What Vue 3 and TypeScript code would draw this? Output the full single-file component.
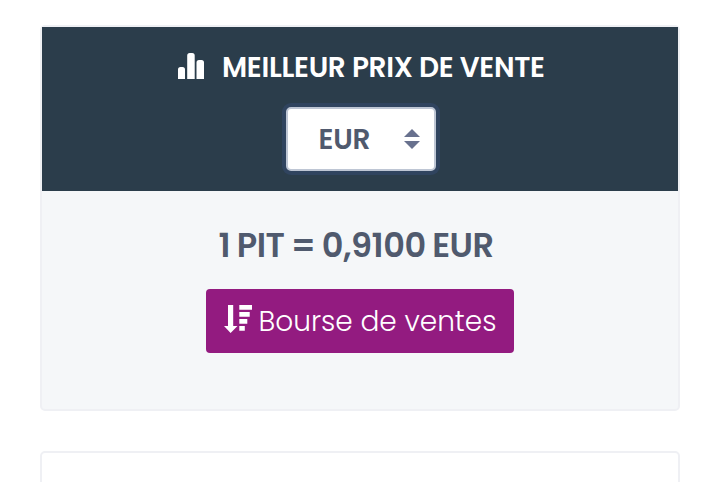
<script setup lang="ts">
import { ref } from 'vue'

const currency = ref<string>('EUR')
const price = ref<string>('0,9100')
</script>

<template>
  <main class="page">
    <section class="card">
      <header class="card-header">
        <h2 class="title">
          <svg class="chart-icon" viewBox="0 0 26 26" aria-hidden="true">
            <path d="M0 26V16.500q0-2.500 2.500-2.500h2q2.500 0 2.500 2.500V26zM9.200 26V2.500q0-2.500 2.500-2.500h2.500q2.500 0 2.500 2.500V26zM18.500 26V9.500q0-2.500 2.500-2.500h2.500q2.500 0 2.500 2.500V26z" />
          </svg>
          <span class="title-text">MEILLEUR PRIX DE VENTE</span>
        </h2>
        <button class="select" type="button">
          <span class="select-text">{{ currency }}</span>
          <svg class="caret" viewBox="0 0 16 20" aria-hidden="true">
            <path d="M0 8L8 0l8 8zM0 12h16l-8 8z" />
          </svg>
        </button>
      </header>
      <div class="card-body">
        <p class="price">1 PIT = {{ price }} {{ currency }}</p>
        <button class="action" type="button">
          <svg class="sort-icon" viewBox="0 0 28 28" aria-hidden="true">
            <path d="M4 0h5.200v21h4.300L6.600 28 0 21h4zM15.300 0H28v4.700H15.300zM15.300 7h10.400v4.700H15.300zM15.300 14h8v4.700h-8zM15.300 21h5.500v4.700h-5.500z" />
          </svg>
          <span class="action-text">Bourse de ventes</span>
        </button>
      </div>
    </section>
    <section class="card next-card"></section>
  </main>
</template>

<style>
body {
  margin: 0;
  background: #fff;
  overflow: hidden;
}
</style>

<style scoped>
.page {
  box-sizing: border-box;
  height: 482px;
  padding: 25px 40px 0;
  overflow: hidden;
  font-family: Poppins, Inter, sans-serif;
}
.card {
  box-sizing: border-box;
  height: 386px;
  border: 2px solid #eff0f4;
  border-radius: 5px;
  background: #f5f7f9;
}
.next-card {
  height: 120px;
  margin-top: 40px;
  background: #fff;
}
.card-header {
  box-sizing: border-box;
  height: 164px;
  padding-top: 20px;
  display: flex;
  flex-direction: column;
  align-items: center;
  background: #2b3d4b;
}
.title {
  width: 366px;
  height: 40px;
  margin: 0;
  display: flex;
  align-items: center;
  color: #fff;
  font-size: 28px;
  font-weight: 600;
  line-height: 40px;
  white-space: nowrap;
}
.chart-icon {
  width: 26px;
  height: 26px;
  margin: 0 18px 2px 1px;
  fill: #fff;
  flex: none;
}
.title-text {
  padding-top: 2px;
  letter-spacing: -0.3px;
}
.select {
  box-sizing: border-box;
  width: 150px;
  height: 64px;
  margin: 20px 0 0 2px;
  padding: 0 14px 0 30.500px;
  display: flex;
  align-items: center;
  justify-content: space-between;
  border: 2px solid #bec6d4;
  border-radius: 5px;
  background: #fff;
  box-shadow: 0 0 0 4px #30445f;
  color: #505a6e;
  font-family: inherit;
  font-size: 28px;
  font-weight: 600;
}
.select-text {
  padding-top: 2px;
  letter-spacing: -0.2px;
}
.caret {
  width: 16px;
  height: 20px;
  fill: #68718e;
}
.card-body {
  padding-top: 30px;
  display: flex;
  flex-direction: column;
  align-items: center;
}
.price {
  width: 283px;
  height: 50px;
  margin: 0;
  color: #505a6e;
  font-size: 33.600px;
  font-weight: 600;
  line-height: 50px;
  letter-spacing: -0.5px;
  word-spacing: -0.9px;
  white-space: nowrap;
}
.action {
  box-sizing: border-box;
  width: 308px;
  height: 64px;
  margin-top: 18px;
  padding: 0 0 0 18px;
  display: flex;
  align-items: center;
  border: 0;
  border-radius: 4px;
  background: #931b80;
  color: #fff;
  font-family: inherit;
  font-size: 28px;
  font-weight: 300;
  white-space: nowrap;
}
.sort-icon {
  width: 28px;
  height: 28px;
  margin: 0 6.500px 4px 0;
  fill: #fff;
  flex: none;
}
.action-text {
  padding-top: 2px;
}
</style>
